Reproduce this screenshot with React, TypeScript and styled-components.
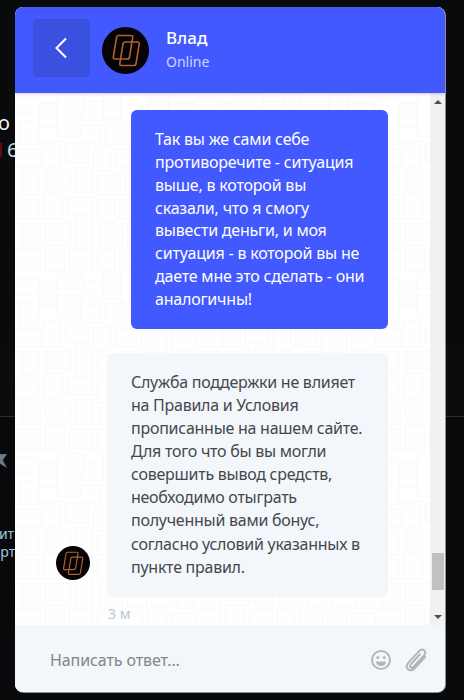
import * as React from 'react';
import styled, { createGlobalStyle } from 'styled-components';

// faint tiled squares behind the messages
const squares: [number, number, number, number][] = [
  [0, 4, 24, 18], [24, 10, 18, 24], [42, 0, 26, 16], [68, 8, 20, 20], [88, 0, 18, 26], [106, 12, 28, 18], [134, 2, 20, 24], [154, 10, 26, 20],
  [4, 28, 20, 24], [42, 22, 24, 22], [66, 32, 20, 18], [90, 30, 26, 22], [120, 34, 18, 20], [140, 30, 22, 24], [162, 36, 18, 18],
  [0, 56, 26, 18], [28, 48, 18, 26], [50, 50, 24, 20], [78, 54, 18, 24], [100, 56, 22, 18], [126, 58, 26, 22], [156, 58, 24, 20],
  [6, 78, 18, 24], [30, 78, 26, 18], [60, 74, 18, 26], [82, 82, 24, 20], [110, 78, 18, 24], [132, 84, 22, 18], [158, 82, 20, 24],
  [0, 106, 24, 20], [28, 100, 20, 26], [52, 104, 26, 18], [82, 106, 18, 24], [104, 106, 26, 20], [134, 106, 20, 24], [158, 110, 22, 18],
  [6, 130, 20, 22], [30, 130, 26, 18], [60, 126, 18, 26], [84, 134, 24, 18], [112, 130, 20, 24], [136, 134, 24, 20], [162, 132, 18, 24],
  [0, 156, 26, 20], [30, 152, 20, 26], [54, 156, 24, 20], [82, 156, 18, 22], [104, 158, 24, 18], [132, 158, 20, 20], [156, 160, 24, 18],
];

const tile = `<svg xmlns='http://www.w3.org/2000/svg' width='180' height='180'><g fill='#fefefe' stroke='#f9f9f9'>${squares
  .map(([x, y, w, h]) => `<rect x='${x}' y='${y}' width='${w}' height='${h}'/>`)
  .join('')}</g></svg>`;

const GlobalStyle = createGlobalStyle`
  html, body {
    margin: 0;
    padding: 0;
    background: #090a0c;
    height: 100%;
    overflow: hidden;
  }
  body {
    font-family: "Noto Sans", "Open Sans", sans-serif;
  }
`;

const Page = styled.div`
  position: relative;
  width: 464px;
  height: 700px;
  overflow: hidden;
  background: #090a0c;
`;

const BackdropSection = styled.div<{ $height: number; $bg: string; $line?: boolean }>`
  height: ${props => props.$height}px;
  box-sizing: border-box;
  background: ${props => props.$bg};
  border-bottom: ${props => (props.$line ? '1px solid #2b2d30' : 'none')};
  overflow: hidden;
`;

const BackdropWhite = styled.div`
  margin: 109px 0 0 -2px;
  font-size: 20px;
  line-height: 27px;
  color: #f0f0f0;
`;

const BackdropBlue = styled.div`
  display: flex;
  align-items: center;
  font-size: 20px;
  line-height: 27px;
  color: #bcdcf0;
`;

const RedMark = styled.span`
  width: 2px;
  height: 14px;
  margin-right: 5px;
  background: #5c0d10;
`;

const BackdropStar = styled.div`
  margin: 37px 0 0 -7px;
  width: 14px;
  height: 14px;
  background: #6d7a86;
  clip-path: polygon(50% 0, 100% 0, 70% 45%, 100% 100%, 50% 70%, 0 45%);
`;

const BackdropLink = styled.div`
  margin-left: -8px;
  font-size: 14px;
  line-height: 18px;
  color: #9fc5de;
`;

const BackdropLinks = styled.div`
  margin-top: 57px;
`;

const Widget = styled.div`
  position: absolute;
  top: 7px;
  left: 15px;
  width: 430px;
  height: 685px;
  display: flex;
  flex-direction: column;
  border-radius: 8px;
  overflow: hidden;
  background: #fff;
  box-shadow: 0.5px 0.5px 0 0.5px #8f9092;
`;

const Header = styled.header`
  position: relative;
  z-index: 1;
  flex: 0 0 86px;
  display: flex;
  align-items: center;
  padding: 0 0 0 18px;
  background: #4259ff;
  box-shadow: 0 1px 3px rgba(0, 0, 0, 0.18);
`;

const BackButton = styled.button`
  width: 57px;
  height: 58px;
  margin: -4px 12px 0 0;
  padding: 0;
  border: 0;
  border-radius: 4px;
  background: #3a50de;
  display: flex;
  align-items: center;
  justify-content: center;
`;

const AvatarCircle = styled.div<{ $size: number }>`
  flex: none;
  width: ${props => props.$size}px;
  height: ${props => props.$size}px;
  border-radius: 50%;
  background: #050304;
  display: flex;
  align-items: center;
  justify-content: center;
`;

const HeaderInfo = styled.div`
  display: flex;
  flex-direction: column;
  margin: -1px 0 0 17px;
`;

const Name = styled.div`
  font-size: 17px;
  line-height: 24px;
  font-weight: 500;
  color: #fff;
`;

const Status = styled.div`
  font-size: 14px;
  line-height: 24px;
  color: #d0d6ff;
`;

const Body = styled.div`
  flex: 1;
  min-height: 0;
  display: flex;
  background-color: #fff;
  background-image: url("data:image/svg+xml,${encodeURIComponent(tile)}");
`;

const Messages = styled.div`
  flex: 1;
  min-width: 0;
  padding: 17px 42px 0 41px;
  display: flex;
  flex-direction: column;
`;

const Bubble = styled.div<{ $own?: boolean }>`
  box-sizing: border-box;
  padding: 18px 24px;
  border-radius: 6px;
  font-size: 16px;
  letter-spacing: ${props => (props.$own ? '-0.2px' : '-0.26px')};
  line-height: ${props => (props.$own ? '22.857px' : '23.1px')};
  background: ${props => (props.$own ? '#4259ff' : '#f3f7fb')};
  color: ${props => (props.$own ? '#fff' : '#45484b')};
  width: ${props => (props.$own ? '257px' : '281px')};
`;

const Line = styled.div`
  white-space: nowrap;
`;

const OwnRow = styled.div`
  display: flex;
  justify-content: flex-end;
  margin-bottom: 24px;
`;

const IncomingRow = styled.div`
  display: flex;
  align-items: flex-end;
  gap: 17px;
`;

const SmallAvatarWrap = styled.div`
  margin-bottom: 17px;
`;

const Time = styled.div`
  margin: 7px 0 0 52px;
  font-size: 14px;
  line-height: 19px;
  color: #b9c6d4;
`;

const ScrollTrack = styled.div`
  flex: 0 0 15px;
  display: flex;
  flex-direction: column;
  align-items: center;
  background: #f1f1f1;
`;

const Arrow = styled.div<{ $down?: boolean }>`
  flex: 0 0 17px;
  width: 15px;
  display: flex;
  justify-content: center;
  align-items: center;

  &::before {
    content: '';
    border-left: 4px solid transparent;
    border-right: 4px solid transparent;
    ${props =>
      props.$down ? 'border-top: 4px solid #505050;' : 'border-bottom: 4px solid #505050;'}
  }
`;

const ScrollSpace = styled.div`
  flex: 1;
`;

const Thumb = styled.div`
  flex: 0 0 37px;
  width: 12px;
  margin-bottom: 18px;
  background: #c1c1c1;
`;

const Footer = styled.footer`
  flex: 0 0 65px;
  display: flex;
  align-items: center;
  padding: 2px 17px 0 35px;
  background: #f3f7fb;
`;

const Placeholder = styled.div`
  flex: 1;
  font-size: 16px;
  letter-spacing: -0.1px;
  color: #858585;
`;

const FooterIcons = styled.div`
  display: flex;
  align-items: center;
  gap: 12px;
`;

const logoCard =
  'M15.500 8.500H28q2 0 1.700 2L26.500 30q-.3 2-2.300 2H12q-2 0-1.700-2l3.200-19.500q.3-2 2-2z';

const Logo: React.FC<{ size: number }> = ({ size }) => (
  <svg width={size} height={size} viewBox="0 0 46 46" fill="none">
    <g stroke="#b0622f" strokeWidth="1.600">
      <path d={logoCard} />
      <path d={logoCard} transform="translate(6.500 6.500)" />
    </g>
  </svg>
);

const ChevronLeft = () => (
  <svg width="14" height="22" viewBox="0 0 14 22" fill="none">
    <path d="M11 1.500 1.500 11l9.500 9.500" stroke="#fff" strokeWidth="2" />
  </svg>
);

const SmileIcon = () => (
  <svg width="22" height="22" viewBox="0 0 22 22">
    <circle cx="11" cy="11" r="9" fill="none" stroke="#b5b5b5" strokeWidth="2" />
    <circle cx="7.800" cy="8.600" r="1.500" fill="#b5b5b5" />
    <circle cx="14.200" cy="8.600" r="1.500" fill="#b5b5b5" />
    <path d="M6 12.500h10c0 3-2.200 4.600-5 4.600S6 15.500 6 12.500Z" fill="#b5b5b5" />
  </svg>
);

const ClipIcon = () => (
  <svg width="24" height="24" viewBox="0 0 24 24" fill="none">
    <path
      d="M21 9 10.500 20.500c-1.900 2-4.700 2.300-6.500.7s-1.700-4.300.2-6.400L15.300 2.900c1.400-1.500 3.600-1.700 5-.5s1.300 3.300 0 4.800L9.500 18.800c-.9 1-2.200 1.200-3 .5s-.7-2 .2-3l9.300-10"
      stroke="#b5b5b5"
      strokeWidth="2"
      strokeLinecap="round"
    />
  </svg>
);

const ownLines = [
  'Так вы же сами себе',
  'противоречите - ситуация',
  'выше, в которой вы',
  'сказали, что я смогу',
  'вывести деньги, и моя',
  'ситуация - в которой вы не',
  'даете мне это сделать - они',
  'аналогичны!',
];

const replyLines = [
  'Служба поддержки не влияет',
  'на Правила и Условия',
  'прописанные на нашем сайте.',
  'Для того что бы вы могли',
  'совершить вывод средств,',
  'необходимо отыграть',
  'полученный вами бонус,',
  'согласно условий указанных в',
  'пункте правил.',
];

export default function App() {
  return (
    <>
      <GlobalStyle />
      <Page>
        <BackdropSection $height={345} $bg="#090a0c">
          <BackdropWhite>о</BackdropWhite>
          <BackdropBlue>
            <RedMark />6
          </BackdropBlue>
        </BackdropSection>
        <BackdropSection $height={72} $bg="#0b0c0e" $line />
        <BackdropSection $height={283} $bg="#08090b">
          <BackdropStar />
          <BackdropLinks>
            <BackdropLink>сит</BackdropLink>
            <BackdropLink>орт</BackdropLink>
          </BackdropLinks>
        </BackdropSection>

        <Widget>
          <Header>
            <BackButton aria-label="Назад">
              <ChevronLeft />
            </BackButton>
            <AvatarCircle $size={47}>
              <Logo size={46} />
            </AvatarCircle>
            <HeaderInfo>
              <Name>Влад</Name>
              <Status>Online</Status>
            </HeaderInfo>
          </Header>
          <Body>
            <Messages>
              <OwnRow>
                <Bubble $own>
                  {ownLines.map(line => (
                    <Line key={line}>{line}</Line>
                  ))}
                </Bubble>
              </OwnRow>
              <IncomingRow>
                <SmallAvatarWrap>
                  <AvatarCircle $size={34}>
                    <Logo size={34} />
                  </AvatarCircle>
                </SmallAvatarWrap>
                <Bubble>
                  {replyLines.map(line => (
                    <Line key={line}>{line}</Line>
                  ))}
                </Bubble>
              </IncomingRow>
              <Time>3 м</Time>
            </Messages>
            <ScrollTrack>
              <Arrow />
              <ScrollSpace />
              <Thumb />
              <Arrow $down />
            </ScrollTrack>
          </Body>
          <Footer>
            <Placeholder>Написать ответ...</Placeholder>
            <FooterIcons>
              <SmileIcon />
              <ClipIcon />
            </FooterIcons>
          </Footer>
        </Widget>
      </Page>
    </>
  );
}
